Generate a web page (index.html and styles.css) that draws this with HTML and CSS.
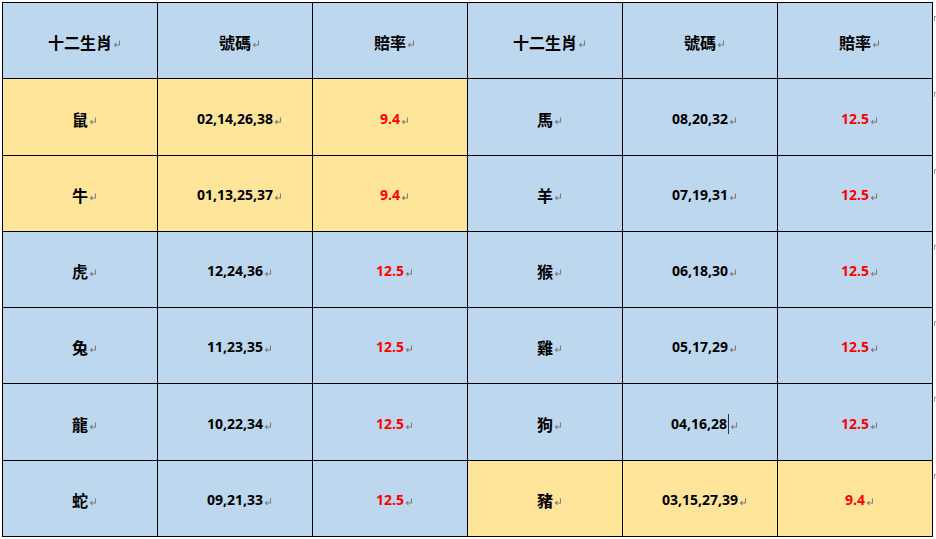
FILE: index.html
```html
<!DOCTYPE html>
<html lang="zh-Hant">
<head>
<meta charset="utf-8">
<title>十二生肖</title>
<link rel="stylesheet" href="styles.css">
</head>
<body>
<div class="page">
  <div class="grid">
    <div class="cell blue head">十二生肖<span class="pm"><svg viewBox="0 0 8 8" width="8" height="8"><path d="M6.5 0.5V5H1.5M3.3 3.2L1.5 5L3.3 6.8" fill="none" stroke="#7f7f7f" stroke-width="1.1"/></svg></span></div>
    <div class="cell blue head">號碼<span class="pm"><svg viewBox="0 0 8 8" width="8" height="8"><path d="M6.5 0.5V5H1.5M3.3 3.2L1.5 5L3.3 6.8" fill="none" stroke="#7f7f7f" stroke-width="1.1"/></svg></span></div>
    <div class="cell blue head">賠率<span class="pm"><svg viewBox="0 0 8 8" width="8" height="8"><path d="M6.5 0.5V5H1.5M3.3 3.2L1.5 5L3.3 6.8" fill="none" stroke="#7f7f7f" stroke-width="1.1"/></svg></span></div>
    <div class="cell blue head">十二生肖<span class="pm"><svg viewBox="0 0 8 8" width="8" height="8"><path d="M6.5 0.5V5H1.5M3.3 3.2L1.5 5L3.3 6.8" fill="none" stroke="#7f7f7f" stroke-width="1.1"/></svg></span></div>
    <div class="cell blue head">號碼<span class="pm"><svg viewBox="0 0 8 8" width="8" height="8"><path d="M6.5 0.5V5H1.5M3.3 3.2L1.5 5L3.3 6.8" fill="none" stroke="#7f7f7f" stroke-width="1.1"/></svg></span></div>
    <div class="cell blue head">賠率<span class="pm"><svg viewBox="0 0 8 8" width="8" height="8"><path d="M6.5 0.5V5H1.5M3.3 3.2L1.5 5L3.3 6.8" fill="none" stroke="#7f7f7f" stroke-width="1.1"/></svg></span></div>

    <div class="cell yellow zh">鼠<span class="pm"><svg viewBox="0 0 8 8" width="8" height="8"><path d="M6.5 0.5V5H1.5M3.3 3.2L1.5 5L3.3 6.8" fill="none" stroke="#7f7f7f" stroke-width="1.1"/></svg></span></div>
    <div class="cell yellow num">02,14,26,38<span class="pm"><svg viewBox="0 0 8 8" width="8" height="8"><path d="M6.5 0.5V5H1.5M3.3 3.2L1.5 5L3.3 6.8" fill="none" stroke="#7f7f7f" stroke-width="1.1"/></svg></span></div>
    <div class="cell yellow num red">9.4<span class="pm"><svg viewBox="0 0 8 8" width="8" height="8"><path d="M6.5 0.5V5H1.5M3.3 3.2L1.5 5L3.3 6.8" fill="none" stroke="#7f7f7f" stroke-width="1.1"/></svg></span></div>
    <div class="cell blue zh">馬<span class="pm"><svg viewBox="0 0 8 8" width="8" height="8"><path d="M6.5 0.5V5H1.5M3.3 3.2L1.5 5L3.3 6.8" fill="none" stroke="#7f7f7f" stroke-width="1.1"/></svg></span></div>
    <div class="cell blue num">08,20,32<span class="pm"><svg viewBox="0 0 8 8" width="8" height="8"><path d="M6.5 0.5V5H1.5M3.3 3.2L1.5 5L3.3 6.8" fill="none" stroke="#7f7f7f" stroke-width="1.1"/></svg></span></div>
    <div class="cell blue num red">12.5<span class="pm"><svg viewBox="0 0 8 8" width="8" height="8"><path d="M6.5 0.5V5H1.5M3.3 3.2L1.5 5L3.3 6.8" fill="none" stroke="#7f7f7f" stroke-width="1.1"/></svg></span></div>

    <div class="cell yellow zh">牛<span class="pm"><svg viewBox="0 0 8 8" width="8" height="8"><path d="M6.5 0.5V5H1.5M3.3 3.2L1.5 5L3.3 6.8" fill="none" stroke="#7f7f7f" stroke-width="1.1"/></svg></span></div>
    <div class="cell yellow num">01,13,25,37<span class="pm"><svg viewBox="0 0 8 8" width="8" height="8"><path d="M6.5 0.5V5H1.5M3.3 3.2L1.5 5L3.3 6.8" fill="none" stroke="#7f7f7f" stroke-width="1.1"/></svg></span></div>
    <div class="cell yellow num red">9.4<span class="pm"><svg viewBox="0 0 8 8" width="8" height="8"><path d="M6.5 0.5V5H1.5M3.3 3.2L1.5 5L3.3 6.8" fill="none" stroke="#7f7f7f" stroke-width="1.1"/></svg></span></div>
    <div class="cell blue zh">羊<span class="pm"><svg viewBox="0 0 8 8" width="8" height="8"><path d="M6.5 0.5V5H1.5M3.3 3.2L1.5 5L3.3 6.8" fill="none" stroke="#7f7f7f" stroke-width="1.1"/></svg></span></div>
    <div class="cell blue num">07,19,31<span class="pm"><svg viewBox="0 0 8 8" width="8" height="8"><path d="M6.5 0.5V5H1.5M3.3 3.2L1.5 5L3.3 6.8" fill="none" stroke="#7f7f7f" stroke-width="1.1"/></svg></span></div>
    <div class="cell blue num red">12.5<span class="pm"><svg viewBox="0 0 8 8" width="8" height="8"><path d="M6.5 0.5V5H1.5M3.3 3.2L1.5 5L3.3 6.8" fill="none" stroke="#7f7f7f" stroke-width="1.1"/></svg></span></div>

    <div class="cell blue zh">虎<span class="pm"><svg viewBox="0 0 8 8" width="8" height="8"><path d="M6.5 0.5V5H1.5M3.3 3.2L1.5 5L3.3 6.8" fill="none" stroke="#7f7f7f" stroke-width="1.1"/></svg></span></div>
    <div class="cell blue num">12,24,36<span class="pm"><svg viewBox="0 0 8 8" width="8" height="8"><path d="M6.5 0.5V5H1.5M3.3 3.2L1.5 5L3.3 6.8" fill="none" stroke="#7f7f7f" stroke-width="1.1"/></svg></span></div>
    <div class="cell blue num red">12.5<span class="pm"><svg viewBox="0 0 8 8" width="8" height="8"><path d="M6.5 0.5V5H1.5M3.3 3.2L1.5 5L3.3 6.8" fill="none" stroke="#7f7f7f" stroke-width="1.1"/></svg></span></div>
    <div class="cell blue zh">猴<span class="pm"><svg viewBox="0 0 8 8" width="8" height="8"><path d="M6.5 0.5V5H1.5M3.3 3.2L1.5 5L3.3 6.8" fill="none" stroke="#7f7f7f" stroke-width="1.1"/></svg></span></div>
    <div class="cell blue num">06,18,30<span class="pm"><svg viewBox="0 0 8 8" width="8" height="8"><path d="M6.5 0.5V5H1.5M3.3 3.2L1.5 5L3.3 6.8" fill="none" stroke="#7f7f7f" stroke-width="1.1"/></svg></span></div>
    <div class="cell blue num red">12.5<span class="pm"><svg viewBox="0 0 8 8" width="8" height="8"><path d="M6.5 0.5V5H1.5M3.3 3.2L1.5 5L3.3 6.8" fill="none" stroke="#7f7f7f" stroke-width="1.1"/></svg></span></div>

    <div class="cell blue zh">兔<span class="pm"><svg viewBox="0 0 8 8" width="8" height="8"><path d="M6.5 0.5V5H1.5M3.3 3.2L1.5 5L3.3 6.8" fill="none" stroke="#7f7f7f" stroke-width="1.1"/></svg></span></div>
    <div class="cell blue num">11,23,35<span class="pm"><svg viewBox="0 0 8 8" width="8" height="8"><path d="M6.5 0.5V5H1.5M3.3 3.2L1.5 5L3.3 6.8" fill="none" stroke="#7f7f7f" stroke-width="1.1"/></svg></span></div>
    <div class="cell blue num red">12.5<span class="pm"><svg viewBox="0 0 8 8" width="8" height="8"><path d="M6.5 0.5V5H1.5M3.3 3.2L1.5 5L3.3 6.8" fill="none" stroke="#7f7f7f" stroke-width="1.1"/></svg></span></div>
    <div class="cell blue zh">雞<span class="pm"><svg viewBox="0 0 8 8" width="8" height="8"><path d="M6.5 0.5V5H1.5M3.3 3.2L1.5 5L3.3 6.8" fill="none" stroke="#7f7f7f" stroke-width="1.1"/></svg></span></div>
    <div class="cell blue num">05,17,29<span class="pm"><svg viewBox="0 0 8 8" width="8" height="8"><path d="M6.5 0.5V5H1.5M3.3 3.2L1.5 5L3.3 6.8" fill="none" stroke="#7f7f7f" stroke-width="1.1"/></svg></span></div>
    <div class="cell blue num red">12.5<span class="pm"><svg viewBox="0 0 8 8" width="8" height="8"><path d="M6.5 0.5V5H1.5M3.3 3.2L1.5 5L3.3 6.8" fill="none" stroke="#7f7f7f" stroke-width="1.1"/></svg></span></div>

    <div class="cell blue zh">龍<span class="pm"><svg viewBox="0 0 8 8" width="8" height="8"><path d="M6.5 0.5V5H1.5M3.3 3.2L1.5 5L3.3 6.8" fill="none" stroke="#7f7f7f" stroke-width="1.1"/></svg></span></div>
    <div class="cell blue num">10,22,34<span class="pm"><svg viewBox="0 0 8 8" width="8" height="8"><path d="M6.5 0.5V5H1.5M3.3 3.2L1.5 5L3.3 6.8" fill="none" stroke="#7f7f7f" stroke-width="1.1"/></svg></span></div>
    <div class="cell blue num red">12.5<span class="pm"><svg viewBox="0 0 8 8" width="8" height="8"><path d="M6.5 0.5V5H1.5M3.3 3.2L1.5 5L3.3 6.8" fill="none" stroke="#7f7f7f" stroke-width="1.1"/></svg></span></div>
    <div class="cell blue zh">狗<span class="pm"><svg viewBox="0 0 8 8" width="8" height="8"><path d="M6.5 0.5V5H1.5M3.3 3.2L1.5 5L3.3 6.8" fill="none" stroke="#7f7f7f" stroke-width="1.1"/></svg></span></div>
    <div class="cell blue num">04,16,28<span class="caret"></span><span class="pm"><svg viewBox="0 0 8 8" width="8" height="8"><path d="M6.5 0.5V5H1.5M3.3 3.2L1.5 5L3.3 6.8" fill="none" stroke="#7f7f7f" stroke-width="1.1"/></svg></span></div>
    <div class="cell blue num red">12.5<span class="pm"><svg viewBox="0 0 8 8" width="8" height="8"><path d="M6.5 0.5V5H1.5M3.3 3.2L1.5 5L3.3 6.8" fill="none" stroke="#7f7f7f" stroke-width="1.1"/></svg></span></div>

    <div class="cell blue zh">蛇<span class="pm"><svg viewBox="0 0 8 8" width="8" height="8"><path d="M6.5 0.5V5H1.5M3.3 3.2L1.5 5L3.3 6.8" fill="none" stroke="#7f7f7f" stroke-width="1.1"/></svg></span></div>
    <div class="cell blue num">09,21,33<span class="pm"><svg viewBox="0 0 8 8" width="8" height="8"><path d="M6.5 0.5V5H1.5M3.3 3.2L1.5 5L3.3 6.8" fill="none" stroke="#7f7f7f" stroke-width="1.1"/></svg></span></div>
    <div class="cell blue num red">12.5<span class="pm"><svg viewBox="0 0 8 8" width="8" height="8"><path d="M6.5 0.5V5H1.5M3.3 3.2L1.5 5L3.3 6.8" fill="none" stroke="#7f7f7f" stroke-width="1.1"/></svg></span></div>
    <div class="cell yellow zh">豬<span class="pm"><svg viewBox="0 0 8 8" width="8" height="8"><path d="M6.5 0.5V5H1.5M3.3 3.2L1.5 5L3.3 6.8" fill="none" stroke="#7f7f7f" stroke-width="1.1"/></svg></span></div>
    <div class="cell yellow num">03,15,27,39<span class="pm"><svg viewBox="0 0 8 8" width="8" height="8"><path d="M6.5 0.5V5H1.5M3.3 3.2L1.5 5L3.3 6.8" fill="none" stroke="#7f7f7f" stroke-width="1.1"/></svg></span></div>
    <div class="cell yellow num red">9.4<span class="pm"><svg viewBox="0 0 8 8" width="8" height="8"><path d="M6.5 0.5V5H1.5M3.3 3.2L1.5 5L3.3 6.8" fill="none" stroke="#7f7f7f" stroke-width="1.1"/></svg></span></div>
  </div>
  <div class="rowmarks">
    <div class="rm"><span class="rmark"></span></div>
    <div class="rm"><span class="rmark"></span></div>
    <div class="rm"><span class="rmark"></span></div>
    <div class="rm"><span class="rmark"></span></div>
    <div class="rm"><span class="rmark"></span></div>
    <div class="rm"><span class="rmark"></span></div>
    <div class="rm"><span class="rmark"></span></div>
  </div>
</div>
</body>
</html>
```

FILE: styles.css
```css
html, body {
  margin: 0;
  padding: 0;
  background: #ffffff;
}

.page {
  display: flex;
  align-items: flex-start;
  padding: 2px 0 0 2px;
}

.grid {
  display: grid;
  grid-template-columns: repeat(6, 154px);
  grid-template-rows: 75px 76px 75px 75px 75px 76px 75px;
  gap: 1px;
  background: #000000;
  border: 1px solid #000000;
}

.cell {
  display: flex;
  align-items: center;
  justify-content: center;
  padding-top: 3px;
  box-sizing: border-box;
  white-space: nowrap;
  color: #000000;
}

.blue { background: #bdd7ee; }
.yellow { background: #ffe599; }

.head, .zh {
  font-family: "Noto Sans CJK TC", "Noto Sans CJK SC", sans-serif;
  font-weight: 700;
  font-size: 16px;
  line-height: 20px;
}

.num {
  font-family: "Open Sans", "Liberation Sans", sans-serif;
  font-weight: 700;
  font-size: 14px;
  line-height: 20px;
}

.red { color: #ff0000; }

.pm {
  display: inline-block;
  width: 0;
  height: 20px;
  position: relative;
  overflow: visible;
}

.pm svg {
  display: block;
  margin-top: 8px;
  margin-left: 1px;
}

.caret {
  display: inline-block;
  width: 0;
  height: 20px;
  border-left: 1px solid #333333;
  margin-left: 1px;
}

.rowmarks {
  display: grid;
  grid-template-rows: 75px 76px 75px 75px 75px 76px 75px;
  row-gap: 1px;
  padding-top: 1px;
}

.rm {
  display: flex;
  align-items: flex-start;
  padding-top: 13px;
}

.rmark {
  display: block;
  width: 4px;
  height: 5px;
  margin-left: 1px;
  border-left: 1px solid #9a9a9a;
  border-top: 1px solid #9a9a9a;
  box-sizing: border-box;
}
```
